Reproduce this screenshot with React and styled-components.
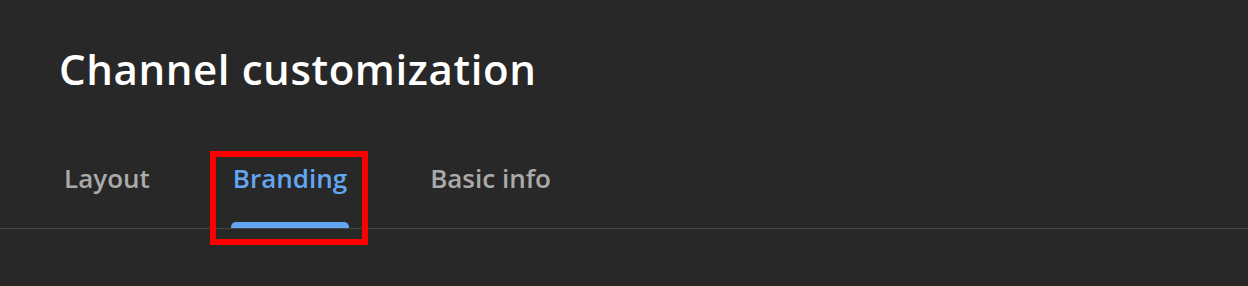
import React from 'react'
import styled, { createGlobalStyle } from 'styled-components'

const GlobalStyle = createGlobalStyle`
    html, body {
        margin: 0;
        padding: 0;
        background: #282828;
    }
    body {
        font-family: "Open Sans", "Noto Sans", sans-serif;
        -webkit-font-smoothing: antialiased;
    }
`

const Page = styled.div`
    width: 1248px;
    height: 286px;
    background: #282828;
    overflow: hidden;
`

const Header = styled.div`
    padding: 44px 0 0 59px;
`

const Title = styled.h1`
    margin: 0;
    font-size: 42px;
    line-height: 50px;
    font-weight: 600;
    color: #ffffff;
    letter-spacing: 0.6px;
`

const TabBar = styled.div`
    display: flex;
    gap: 79px;
    margin-top: 68px;
    padding-left: 62px;
    border-bottom: 1px solid #444444;
`

const Tab = styled.div`
    position: relative;
    display: flex;
    flex-direction: column;
    align-items: stretch;
    cursor: pointer;
`

const TabLabel = styled.span`
    padding: 0 2px;
    font-size: 26px;
    line-height: 32px;
    font-weight: 600;
    color: ${props => (props.active ? '#62a6f2' : '#aaaaaa')};
    white-space: nowrap;
`

const Indicator = styled.div`
    height: 6px;
    margin-top: 28px;
    border-radius: 5px 5px 0 0;
    background: ${props => (props.active ? '#62a6f2' : 'transparent')};
`

const Highlight = styled.div`
    position: absolute;
    left: -21px;
    right: -19px;
    top: -11px;
    bottom: -17px;
    border: 6px solid #ff0000;
    pointer-events: none;
`

const tabs = ['Layout', 'Branding', 'Basic info']

const App = () => {
    const current = 'Branding'
    return (
        <Page>
            <GlobalStyle />
            <Header>
                <Title>Channel customization</Title>
            </Header>
            <TabBar>
                {tabs.map(name => (
                    <Tab key={name}>
                        <TabLabel active={name === current}>{name}</TabLabel>
                        <Indicator active={name === current} />
                        {name === current && <Highlight />}
                    </Tab>
                ))}
            </TabBar>
        </Page>
    )
}

export default App
